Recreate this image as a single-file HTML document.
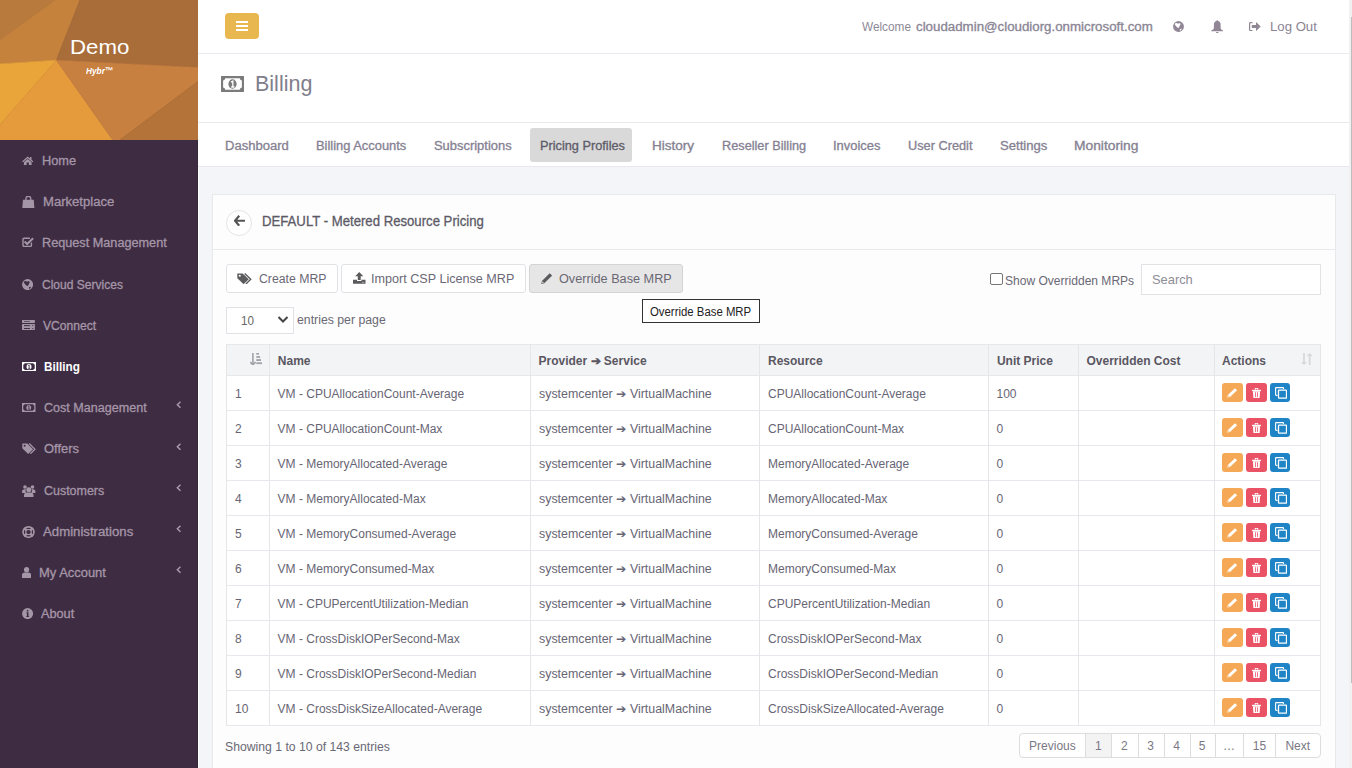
<!DOCTYPE html><html><head><meta charset="utf-8"><style>
*{box-sizing:border-box;margin:0;padding:0}
html,body{width:1352px;height:768px;overflow:hidden;font-family:"Liberation Sans",sans-serif;background:#f4f5f9}
.t{position:absolute;line-height:1;white-space:nowrap}
.b{position:absolute}
</style></head><body>
<div class="b" style="left:0;top:0;width:198px;height:768px;background:#3e2c43"></div>
<svg class="b" style="left:0;top:0" width="198" height="140"><polygon fill="#b97a3e" stroke="#b97a3e" stroke-width="0.6" points="0,0 55,0 0,40"/><polygon fill="#c4823d" stroke="#c4823d" stroke-width="0.6" points="55,0 80,0 56.4,60.2 0,63.9 0,40"/><polygon fill="#a96d3a" stroke="#a96d3a" stroke-width="0.6" points="80,0 198,0 198,67.6 56.4,60.2"/><polygon fill="#e9a53a" stroke="#e9a53a" stroke-width="0.6" points="0,63.9 56.4,60.2 0,124.7"/><polygon fill="#e59b3b" stroke="#e59b3b" stroke-width="0.6" points="0,124.7 56.4,60.2 112.7,140 0,140"/><polygon fill="#c88040" stroke="#c88040" stroke-width="0.6" points="56.4,60.2 198,67.6 198,81.5 120,140 112.7,140"/><polygon fill="#b37339" stroke="#b37339" stroke-width="0.6" points="198,81.5 198,140 120,140"/></svg>
<div class="t" style="left:69.64px;top:36.32px;font-size:21px;color:#fff;font-weight:normal;;transform:scaleX(1.0593);transform-origin:0 0;">Demo</div>
<div class="t" style="left:86.00px;top:66.16px;font-size:9.5px;color:#fff;font-weight:bold;font-style:italic;transform:scaleX(0.8710);transform-origin:0 0;">Hybr™</div>
<div class="t" style="left:41.74px;top:154.94px;font-size:12px;color:#a596a7;-webkit-text-stroke:0.3px #a596a7;;transform:scaleX(1.0645);transform-origin:0 0;">Home</div>
<svg class="b" style="left:22.3px;top:155.7px;" width="11.5" height="9.3" viewBox="0 0 12 9.4" preserveAspectRatio="none"><path d="M6 0.6 L0.2 5.4 L1 6.3 L6 2.2 L11 6.3 L11.8 5.4 L9.9 3.8 V0.9 H8.4 V2.5 Z" fill="#a596a7"/><path d="M2 6.2 L6 3 L10 6.2 V9.4 H7.2 V6.6 H4.8 V9.4 H2 Z" fill="#a596a7"/></svg>
<div class="t" style="left:42.61px;top:196.14px;font-size:12px;color:#a596a7;-webkit-text-stroke:0.3px #a596a7;;transform:scaleX(1.0906);transform-origin:0 0;">Marketplace</div>
<svg class="b" style="left:22.2px;top:195.7px;" width="12.7" height="12.3" viewBox="0 0 13 12.3" preserveAspectRatio="none"><path d="M4 4.5 V2.6 A2.5 2.3 0 0 1 9 2.6 V4.5" stroke="#a596a7" stroke-width="1.3" fill="none"/><path d="M1 3.7 H12 L12.7 12.3 H0.3 Z" fill="#a596a7"/></svg>
<div class="t" style="left:41.64px;top:237.34px;font-size:12px;color:#a596a7;-webkit-text-stroke:0.3px #a596a7;;transform:scaleX(1.0564);transform-origin:0 0;">Request Management</div>
<svg class="b" style="left:22px;top:237.0px;" width="11.9" height="10" viewBox="0 0 12 10" preserveAspectRatio="none"><path d="M8 1.2 H2.2 A1.2 1.2 0 0 0 1 2.4 V8.3 A1.2 1.2 0 0 0 2.2 9.5 H8.3 A1.2 1.2 0 0 0 9.5 8.3 V5.5" stroke="#a596a7" stroke-width="1.4" fill="none"/><path d="M2.6 4.6 L5.2 7 L11.2 1.2" stroke="#a596a7" stroke-width="2" fill="none"/></svg>
<div class="t" style="left:41.70px;top:278.54px;font-size:12px;color:#a596a7;-webkit-text-stroke:0.3px #a596a7;;transform:scaleX(1.0025);transform-origin:0 0;">Cloud Services</div>
<svg class="b" style="left:22px;top:279.0px;" width="11.2" height="11.2" viewBox="0 0 11.2 11.2" preserveAspectRatio="none"><circle cx="5.6" cy="5.6" r="5.5" fill="#a596a7"/><path d="M1.8 3.2 Q2.6 1.6 4.2 2.3 Q5.2 3.2 6.2 2.3 Q7.6 1.9 7.8 3.3 Q6.8 4.6 6.3 6.2 Q5.8 7.4 4.9 6.8 Q2.8 5.3 1.8 3.2 Z" fill="#3e2c43"/><path d="M6.9 8.6 Q7.8 7.4 8.9 8 Q8.8 9.3 7.6 9.9 Q6.8 9.5 6.9 8.6 Z" fill="#3e2c43"/></svg>
<div class="t" style="left:43.40px;top:319.74px;font-size:12px;color:#a596a7;-webkit-text-stroke:0.3px #a596a7;;transform:scaleX(1.0094);transform-origin:0 0;">VConnect</div>
<svg class="b" style="left:22px;top:320.0px;" width="12.9" height="9.9" viewBox="0 0 13 10" preserveAspectRatio="none"><rect x="0" y="0" width="13" height="3" rx="0.6" fill="#a596a7"/><rect x="0" y="4" width="13" height="6" rx="0.6" fill="#a596a7"/><rect x="2" y="1" width="6" height="0.9" fill="#3e2c43" opacity=".7"/><rect x="2" y="5.2" width="6" height="1" fill="#3e2c43"/><rect x="2" y="8.1" width="6" height="1" fill="#3e2c43"/><rect x="10" y="5.2" width="1.6" height="1" fill="#3e2c43" opacity=".7"/><rect x="10" y="8.1" width="1.6" height="1" fill="#3e2c43" opacity=".7"/></svg>
<div class="t" style="left:43.70px;top:360.94px;font-size:12px;color:#ffffff;font-weight:bold;;transform:scaleX(0.9778);transform-origin:0 0;">Billing</div>
<svg class="b" style="left:22px;top:361.7px;" width="14" height="9.3" viewBox="0 0 14 9.3" preserveAspectRatio="none"><rect x="0" y="0" width="14" height="9.3" fill="#ffffff"/><path d="M2.6 1.3 H11.4 A1.4 1.4 0 0 0 12.7 2.6 V6.7 A1.4 1.4 0 0 0 11.4 8 H2.6 A1.4 1.4 0 0 0 1.3 6.7 V2.6 A1.4 1.4 0 0 0 2.6 1.3 Z" fill="#3e2c43"/><ellipse cx="7" cy="4.65" rx="2.5" ry="2.7" fill="#ffffff"/><path d="M6.1 3.6 L7.2 3 V6.4 M6.2 6.4 H8.2" stroke="#3e2c43" stroke-width="0.8" fill="none"/></svg>
<div class="t" style="left:44.30px;top:402.14px;font-size:12px;color:#a596a7;-webkit-text-stroke:0.3px #a596a7;;transform:scaleX(1.0469);transform-origin:0 0;">Cost Management</div>
<svg class="b" style="left:176px;top:401.3px" width="6" height="8"><path d="M4.5 0.8 L1.3 3.8 L4.5 6.8" stroke="#a99cab" stroke-width="1.4" fill="none"/></svg>
<svg class="b" style="left:22px;top:402.9px;" width="13.5" height="9.0" viewBox="0 0 14 9.3" preserveAspectRatio="none"><rect x="0" y="0" width="14" height="9.3" fill="#a596a7"/><path d="M2.6 1.3 H11.4 A1.4 1.4 0 0 0 12.7 2.6 V6.7 A1.4 1.4 0 0 0 11.4 8 H2.6 A1.4 1.4 0 0 0 1.3 6.7 V2.6 A1.4 1.4 0 0 0 2.6 1.3 Z" fill="#3e2c43"/><ellipse cx="7" cy="4.65" rx="2.5" ry="2.7" fill="#a596a7"/><path d="M6.1 3.6 L7.2 3 V6.4 M6.2 6.4 H8.2" stroke="#3e2c43" stroke-width="0.8" fill="none"/></svg>
<div class="t" style="left:44.00px;top:443.34px;font-size:12px;color:#a596a7;-webkit-text-stroke:0.3px #a596a7;;transform:scaleX(1.0781);transform-origin:0 0;">Offers</div>
<svg class="b" style="left:176px;top:442.5px" width="6" height="8"><path d="M4.5 0.8 L1.3 3.8 L4.5 6.8" stroke="#a99cab" stroke-width="1.4" fill="none"/></svg>
<svg class="b" style="left:22px;top:443.0px;" width="13.5" height="10.9" viewBox="0 0 13.5 11" preserveAspectRatio="none"><path d="M0.3 0.5 H5.3 L11 6.2 L6.2 11 L0.3 5.2 Z" fill="#a596a7"/><circle cx="2.6" cy="2.8" r="1" fill="#3e2c43"/><path d="M7.2 0.5 L12.9 6.2 L8.4 10.8" stroke="#a596a7" stroke-width="1.3" fill="none"/></svg>
<div class="t" style="left:44.00px;top:484.54px;font-size:12px;color:#a596a7;-webkit-text-stroke:0.3px #a596a7;;transform:scaleX(1.0379);transform-origin:0 0;">Customers</div>
<svg class="b" style="left:176px;top:483.7px" width="6" height="8"><path d="M4.5 0.8 L1.3 3.8 L4.5 6.8" stroke="#a99cab" stroke-width="1.4" fill="none"/></svg>
<svg class="b" style="left:22px;top:484.7px;" width="13.5" height="12.2" viewBox="0 0 13.5 12.2" preserveAspectRatio="none"><circle cx="3" cy="2" r="1.8" fill="#a596a7"/><circle cx="10.5" cy="2" r="1.8" fill="#a596a7"/><path d="M0 6.8 Q0 4.2 2.6 4.2 H4 Q3 5.5 4 8 H0.2 Z" fill="#a596a7"/><path d="M13.5 6.8 Q13.5 4.2 10.9 4.2 H9.5 Q10.5 5.5 9.5 8 H13.3 Z" fill="#a596a7"/><circle cx="6.75" cy="4.7" r="2.5" fill="#a596a7"/><path d="M2 12.2 V10.5 Q2 7.6 5 7.6 H8.5 Q11.5 7.6 11.5 10.5 V12.2 Z" fill="#a596a7"/></svg>
<div class="t" style="left:43.00px;top:525.74px;font-size:12px;color:#a596a7;-webkit-text-stroke:0.3px #a596a7;;transform:scaleX(1.1000);transform-origin:0 0;">Administrations</div>
<svg class="b" style="left:176px;top:524.9px" width="6" height="8"><path d="M4.5 0.8 L1.3 3.8 L4.5 6.8" stroke="#a99cab" stroke-width="1.4" fill="none"/></svg>
<svg class="b" style="left:22px;top:525.7px;" width="13" height="12.2" viewBox="0 0 13 12.2" preserveAspectRatio="none"><ellipse cx="6.5" cy="6.1" rx="6.3" ry="6.0" fill="#a596a7"/><ellipse cx="6.5" cy="6.1" rx="4.0" ry="3.8" stroke="#3e2c43" stroke-width="1.3" fill="none"/><path d="M2.2 2 L10.8 10.2 M10.8 2 L2.2 10.2" stroke="#a596a7" stroke-width="2.4"/><ellipse cx="6.5" cy="6.1" rx="2.2" ry="2.1" fill="#3e2c43"/></svg>
<div class="t" style="left:38.72px;top:566.94px;font-size:12px;color:#a596a7;-webkit-text-stroke:0.3px #a596a7;;transform:scaleX(1.0787);transform-origin:0 0;">My Account</div>
<svg class="b" style="left:176px;top:566.1px" width="6" height="8"><path d="M4.5 0.8 L1.3 3.8 L4.5 6.8" stroke="#a99cab" stroke-width="1.4" fill="none"/></svg>
<svg class="b" style="left:22px;top:567.2px;" width="9.2" height="11.0" viewBox="0 0 9.2 11" preserveAspectRatio="none"><circle cx="4.6" cy="2.7" r="2.6" fill="#a596a7"/><path d="M0 11 V8.3 Q0 5.5 2.8 5.5 H6.4 Q9.2 5.5 9.2 8.3 V11 Z" fill="#a596a7"/></svg>
<div class="t" style="left:41.40px;top:608.14px;font-size:12px;color:#a596a7;-webkit-text-stroke:0.3px #a596a7;;transform:scaleX(1.0594);transform-origin:0 0;">About</div>
<svg class="b" style="left:22px;top:608.0px;" width="11.2" height="11.2" viewBox="0 0 11.2 11.2" preserveAspectRatio="none"><circle cx="5.6" cy="5.6" r="5.5" fill="#a596a7"/><circle cx="5.6" cy="2.7" r="0.9" fill="#3e2c43"/><path d="M4.4 4.3 H6.5 V8.2 H7.2 V9.1 H4.2 V8.2 H4.9 V5.2 H4.4 Z" fill="#3e2c43"/></svg>
<div class="b" style="left:198px;top:0;width:1px;height:768px;background:#fff"></div>
<div class="b" style="left:197px;top:140px;width:1px;height:628px;background:#36283b"></div>
<div class="b" style="left:198px;top:0;width:1154px;height:53px;background:#fff"></div>
<div class="b" style="left:198px;top:53px;width:1154px;height:1px;background:#e8ebef"></div>
<div class="b" style="left:225px;top:13px;width:34px;height:26px;background:#e9b74f;border-radius:4px"></div>
<div class="b" style="left:236px;top:21px;width:12px;height:2px;background:#fff"></div>
<div class="b" style="left:236px;top:25px;width:12px;height:2px;background:#fff"></div>
<div class="b" style="left:236px;top:29px;width:12px;height:2px;background:#fff"></div>
<div class="t" style="left:862.20px;top:20.54px;font-size:12px;color:#8d8996;font-weight:normal;;transform:scaleX(0.9840);transform-origin:0 0;">Welcome</div>
<div class="t" style="left:915.90px;top:20.54px;font-size:12px;color:#8a8594;-webkit-text-stroke:0.3px #8a8594;;transform:scaleX(1.1085);transform-origin:0 0;">cloudadmin@cloudiorg.onmicrosoft.com</div>
<div class="t" style="left:1269.59px;top:19.50px;font-size:13px;color:#8a8494;font-weight:normal;;transform:scaleX(1.0130);transform-origin:0 0;">Log Out</div>
<svg class="b" style="left:1173.3px;top:20.9px;" width="11" height="11" viewBox="0 0 11.2 11.2" preserveAspectRatio="none"><circle cx="5.6" cy="5.6" r="5.5" fill="#918695"/><path d="M1.8 3.2 Q2.6 1.6 4.2 2.3 Q5.2 3.2 6.2 2.3 Q7.6 1.9 7.8 3.3 Q6.8 4.6 6.3 6.2 Q5.8 7.4 4.9 6.8 Q2.8 5.3 1.8 3.2 Z" fill="#fff"/><path d="M6.9 8.6 Q7.8 7.4 8.9 8 Q8.8 9.3 7.6 9.9 Q6.8 9.5 6.9 8.6 Z" fill="#fff"/></svg>
<svg class="b" style="left:1210.7px;top:19.7px;" width="12.5" height="13.1" viewBox="0 0 12.5 13.1" preserveAspectRatio="none"><path d="M6.25 0.2 Q7.1 0.2 7.1 1.1 Q9.6 1.7 9.6 4.8 V8.2 Q9.8 9.4 12.3 10.6 V11.3 H0.2 V10.6 Q2.7 9.4 2.9 8.2 V4.8 Q2.9 1.7 5.4 1.1 Q5.4 0.2 6.25 0.2 Z" fill="#918695"/><path d="M4.9 11.9 H7.6 Q7.4 13.1 6.25 13.1 Q5.1 13.1 4.9 11.9 Z" fill="#918695"/></svg>
<svg class="b" style="left:1249.2px;top:21.7px;" width="11.7" height="9.1" viewBox="0 0 11.7 9.1" preserveAspectRatio="none"><path d="M3.5 0.6 H1.3 A0.8 0.8 0 0 0 0.6 1.4 V7.7 A0.8 0.8 0 0 0 1.3 8.5 H3.5" stroke="#918695" stroke-width="1.2" fill="none"/><path d="M2.8 3 H7 V0 L11.7 4.55 L7 9.1 V6.1 H2.8 Z" fill="#918695"/></svg>
<div class="b" style="left:198px;top:54px;width:1154px;height:68px;background:#fff"></div>
<div class="b" style="left:198px;top:122px;width:1154px;height:1px;background:#e8e9ed"></div>
<div class="t" style="left:255.32px;top:73.38px;font-size:22px;color:#807e8c;font-weight:normal;;transform:scaleX(0.9772);transform-origin:0 0;">Billing</div>
<svg class="b" style="left:221px;top:76px;" width="23" height="16" viewBox="0 0 14 9.3" preserveAspectRatio="none"><rect x="0" y="0" width="14" height="9.3" fill="#7b7b7b"/><path d="M2.6 1.3 H11.4 A1.4 1.4 0 0 0 12.7 2.6 V6.7 A1.4 1.4 0 0 0 11.4 8 H2.6 A1.4 1.4 0 0 0 1.3 6.7 V2.6 A1.4 1.4 0 0 0 2.6 1.3 Z" fill="#fff"/><ellipse cx="7" cy="4.65" rx="2.5" ry="2.7" fill="#7b7b7b"/><path d="M6.1 3.6 L7.2 3 V6.4 M6.2 6.4 H8.2" stroke="#fff" stroke-width="0.8" fill="none"/></svg>
<div class="b" style="left:198px;top:123px;width:1154px;height:43px;background:#fff"></div>
<div class="b" style="left:198px;top:166px;width:1154px;height:1px;background:#e6e8ec"></div>
<div class="b" style="left:530px;top:128px;width:102px;height:34px;background:#d9d9d9;border-radius:3px"></div>
<div class="t" style="left:225.01px;top:140.34px;font-size:12px;color:#858192;-webkit-text-stroke:0.3px #858192;;transform:scaleX(1.0877);transform-origin:0 0;">Dashboard</div>
<div class="t" style="left:316.03px;top:140.34px;font-size:12px;color:#858192;-webkit-text-stroke:0.3px #858192;;transform:scaleX(1.0735);transform-origin:0 0;">Billing Accounts</div>
<div class="t" style="left:434.12px;top:140.34px;font-size:12px;color:#858192;-webkit-text-stroke:0.3px #858192;;transform:scaleX(1.0775);transform-origin:0 0;">Subscriptions</div>
<div class="t" style="left:539.54px;top:140.34px;font-size:12px;color:#5f5c69;-webkit-text-stroke:0.3px #5f5c69;;transform:scaleX(1.0620);transform-origin:0 0;">Pricing Profiles</div>
<div class="t" style="left:652.47px;top:140.34px;font-size:12px;color:#858192;-webkit-text-stroke:0.3px #858192;;transform:scaleX(1.1278);transform-origin:0 0;">History</div>
<div class="t" style="left:722.04px;top:140.34px;font-size:12px;color:#858192;-webkit-text-stroke:0.3px #858192;;transform:scaleX(1.0603);transform-origin:0 0;">Reseller Billing</div>
<div class="t" style="left:833.22px;top:140.34px;font-size:12px;color:#858192;-webkit-text-stroke:0.3px #858192;;transform:scaleX(1.0767);transform-origin:0 0;">Invoices</div>
<div class="t" style="left:907.94px;top:140.34px;font-size:12px;color:#858192;-webkit-text-stroke:0.3px #858192;;transform:scaleX(1.0617);transform-origin:0 0;">User Credit</div>
<div class="t" style="left:1000.11px;top:140.34px;font-size:12px;color:#858192;-webkit-text-stroke:0.3px #858192;;transform:scaleX(1.0905);transform-origin:0 0;">Settings</div>
<div class="t" style="left:1074.25px;top:140.34px;font-size:12px;color:#858192;-webkit-text-stroke:0.3px #858192;;transform:scaleX(1.1491);transform-origin:0 0;">Monitoring</div>
<div class="b" style="left:212px;top:194px;width:1124px;height:600px;background:#fdfdfd;border:1px solid #e7e9ed"></div>
<div class="b" style="left:213px;top:249px;width:1122px;height:1px;background:#e7e9ed"></div>
<div class="b" style="left:226px;top:209.5px;width:26px;height:26px;border:1px solid #e4e4e4;border-radius:50%;background:#fff"></div>
<div class="t" style="left:262.46px;top:214.35px;font-size:14px;color:#5c5a66;-webkit-text-stroke:0.3px #5c5a66;;transform:scaleX(0.9400);transform-origin:0 0;">DEFAULT - Metered Resource Pricing</div>
<svg class="b" style="left:234.2px;top:214.9px;" width="11.3" height="11.5" viewBox="0 0 11.3 11.5" preserveAspectRatio="none"><path d="M5.2 0.8 L1 5.75 L5.2 10.7 M1.2 5.75 H11.3" stroke="#555555" stroke-width="2.2" fill="none"/></svg>
<div class="b" style="left:226px;top:264px;width:112px;height:29px;background:#fff;border:1px solid #e0e2e6;border-radius:3px"></div>
<div class="b" style="left:341px;top:264px;width:185px;height:29px;background:#fff;border:1px solid #e0e2e6;border-radius:3px"></div>
<div class="b" style="left:529px;top:264px;width:154px;height:29px;background:#e6e6e6;border:1px solid #d4d4d4;border-radius:3px"></div>
<svg class="b" style="left:237.4px;top:272.7px;" width="14.4" height="11.2" viewBox="0 0 13.5 11" preserveAspectRatio="none"><path d="M0.3 0.5 H5.3 L11 6.2 L6.2 11 L0.3 5.2 Z" fill="#5b5b5e"/><circle cx="2.6" cy="2.8" r="1" fill="#fff"/><path d="M7.2 0.5 L12.9 6.2 L8.4 10.8" stroke="#5b5b5e" stroke-width="1.3" fill="none"/></svg>
<svg class="b" style="left:353px;top:272px;" width="12.5" height="11.8" viewBox="0 0 12.5 11.8" preserveAspectRatio="none"><path d="M6.25 0 L10.3 4.2 H7.7 V8 H4.8 V4.2 H2.2 Z" fill="#5b5b5e"/><path d="M0 7.7 H4 V9 H8.5 V7.7 H12.5 V11.8 H0 Z" fill="#5b5b5e"/><circle cx="9.3" cy="10.2" r="0.45" fill="#fff"/><circle cx="10.8" cy="10.2" r="0.45" fill="#fff"/></svg>
<svg class="b" style="left:540.6px;top:272.7px;" width="11.4" height="11.2" viewBox="0 0 11.5 11.5" preserveAspectRatio="none"><path d="M8.8 0.3 L11.2 2.7 L3.3 10.6 L0.3 11.2 L0.9 8.2 Z" fill="#5b5b5e"/><path d="M1.6 8.6 L2.9 9.9 L1 10.4 Z" fill="#e6e6e6"/></svg>
<div class="t" style="left:258.50px;top:273.12px;font-size:12.5px;color:#6a6874;font-weight:normal;;transform:scaleX(0.9812);transform-origin:0 0;">Create MRP</div>
<div class="t" style="left:371.29px;top:273.12px;font-size:12.5px;color:#6a6874;font-weight:normal;;transform:scaleX(1.0078);transform-origin:0 0;">Import CSP License MRP</div>
<div class="t" style="left:559.00px;top:273.12px;font-size:12.5px;color:#6a6874;font-weight:normal;;transform:scaleX(1.0144);transform-origin:0 0;">Override Base MRP</div>
<div class="b" style="left:642px;top:299px;width:118px;height:24px;background:#fff;border:1px solid #333"></div>
<div class="t" style="left:650.40px;top:305.54px;font-size:12px;color:#222;font-weight:normal;;transform:scaleX(0.9481);transform-origin:0 0;">Override Base MRP</div>
<div class="b" style="left:226px;top:307px;width:68px;height:27px;background:#fff;border:1px solid #e0e2e6"></div>
<div class="t" style="left:240.53px;top:314.84px;font-size:12px;color:#666;font-weight:normal;;transform:scaleX(0.9750);transform-origin:0 0;">10</div>
<svg class="b" style="left:277px;top:315px" width="12" height="9"><path d="M1.5 2 L6 6.5 L10.5 2" stroke="#444" stroke-width="2" fill="none"/></svg>
<div class="t" style="left:296.80px;top:314.42px;font-size:12.5px;color:#6a6874;font-weight:normal;;transform:scaleX(0.9822);transform-origin:0 0;">entries per page</div>
<div class="b" style="left:990px;top:273px;width:13px;height:12px;background:#fff;border:1px solid #767676;border-radius:2px"></div>
<div class="t" style="left:1004.84px;top:275.32px;font-size:12.5px;color:#6a6874;font-weight:normal;;transform:scaleX(0.9632);transform-origin:0 0;">Show Overridden MRPs</div>
<div class="b" style="left:1141px;top:264px;width:180px;height:31px;background:#fff;border:1px solid #e0e2e6"></div>
<div class="t" style="left:1151.91px;top:273.00px;font-size:13px;color:#8e8c96;font-weight:normal;;transform:scaleX(0.9900);transform-origin:0 0;">Search</div>
<div class="b" style="left:226px;top:344px;width:1095px;height:31px;background:#f3f4f6"></div>
<div class="b" style="left:226px;top:375px;width:1095px;height:350px;background:#fff"></div>
<div class="b" style="left:226px;top:344px;width:1095px;height:1px;background:#e5e8ec"></div>
<div class="b" style="left:226px;top:375px;width:1095px;height:1px;background:#e5e8ec"></div>
<div class="b" style="left:226px;top:410px;width:1095px;height:1px;background:#e5e8ec"></div>
<div class="b" style="left:226px;top:445px;width:1095px;height:1px;background:#e5e8ec"></div>
<div class="b" style="left:226px;top:480px;width:1095px;height:1px;background:#e5e8ec"></div>
<div class="b" style="left:226px;top:515px;width:1095px;height:1px;background:#e5e8ec"></div>
<div class="b" style="left:226px;top:550px;width:1095px;height:1px;background:#e5e8ec"></div>
<div class="b" style="left:226px;top:585px;width:1095px;height:1px;background:#e5e8ec"></div>
<div class="b" style="left:226px;top:620px;width:1095px;height:1px;background:#e5e8ec"></div>
<div class="b" style="left:226px;top:655px;width:1095px;height:1px;background:#e5e8ec"></div>
<div class="b" style="left:226px;top:690px;width:1095px;height:1px;background:#e5e8ec"></div>
<div class="b" style="left:226px;top:725px;width:1095px;height:1px;background:#e5e8ec"></div>
<div class="b" style="left:226px;top:344px;width:1px;height:382px;background:#e6e6e6"></div>
<div class="b" style="left:269px;top:344px;width:1px;height:382px;background:#e6e6e6"></div>
<div class="b" style="left:530px;top:344px;width:1px;height:382px;background:#e6e6e6"></div>
<div class="b" style="left:759px;top:344px;width:1px;height:382px;background:#e6e6e6"></div>
<div class="b" style="left:988px;top:344px;width:1px;height:382px;background:#e6e6e6"></div>
<div class="b" style="left:1078px;top:344px;width:1px;height:382px;background:#e6e6e6"></div>
<div class="b" style="left:1214px;top:344px;width:1px;height:382px;background:#e6e6e6"></div>
<div class="b" style="left:1320px;top:344px;width:1px;height:382px;background:#e6e6e6"></div>
<div class="t" style="left:277.80px;top:355.14px;font-size:12px;color:#5a5762;font-weight:bold;;">Name</div>
<div class="t" style="left:538.50px;top:355.14px;font-size:12px;color:#5a5762;font-weight:bold;;">Provider ➔ Service</div>
<div class="t" style="left:768.00px;top:355.14px;font-size:12px;color:#5a5762;font-weight:bold;;">Resource</div>
<div class="t" style="left:996.90px;top:355.14px;font-size:12px;color:#5a5762;font-weight:bold;;">Unit Price</div>
<div class="t" style="left:1086.50px;top:355.14px;font-size:12px;color:#5a5762;font-weight:bold;;">Overridden Cost</div>
<div class="t" style="left:1222.00px;top:355.14px;font-size:12px;color:#5a5762;font-weight:bold;;">Actions</div>
<div class="t" style="left:235.00px;top:387.84px;font-size:12px;color:#676574;font-weight:normal;;">1</div>
<div class="t" style="left:277.60px;top:387.84px;font-size:12px;color:#676574;font-weight:normal;;">VM - CPUAllocationCount-Average</div>
<div class="t" style="left:538.50px;top:387.84px;font-size:12px;color:#676574;font-weight:normal;;transform:scaleX(1.0329);transform-origin:0 0;">systemcenter ➔ VirtualMachine</div>
<div class="t" style="left:768.00px;top:387.84px;font-size:12px;color:#676574;font-weight:normal;;">CPUAllocationCount-Average</div>
<div class="t" style="left:996.50px;top:387.84px;font-size:12px;color:#676574;font-weight:normal;;">100</div>
<div class="b" style="left:1222px;top:383px;width:21px;height:19px;background:#f5a855;border-radius:3px"></div>
<div class="b" style="left:1246px;top:383px;width:21px;height:19px;background:#ea5265;border-radius:3px"></div>
<div class="b" style="left:1270px;top:383px;width:20px;height:19px;background:#1f84c6;border-radius:3px"></div>
<svg class="b" style="left:1227.2px;top:388px;" width="10.4" height="9.8" viewBox="0 0 11.5 11.5" preserveAspectRatio="none"><path d="M8.8 0.3 L11.2 2.7 L3.3 10.6 L0.3 11.2 L0.9 8.2 Z" fill="#ffffff"/><path d="M1.6 8.6 L2.9 9.9 L1 10.4 Z" fill="#f5a855"/></svg>
<svg class="b" style="left:1251.7px;top:388px;" width="9" height="10.1" viewBox="0 0 9 10" preserveAspectRatio="none"><path d="M3.2 1.8 V0.9 Q3.2 0.2 4 0.2 H5 Q5.8 0.2 5.8 0.9 V1.8" stroke="#ffffff" stroke-width="1" fill="none"/><rect x="0" y="1.8" width="9" height="1.3" fill="#ffffff"/><path d="M0.9 3.1 H8.1 L7.6 10 H1.4 Z" fill="#ffffff"/><rect x="3.1" y="4.2" width="0.8" height="4.8" fill="#ea5265"/><rect x="5.1" y="4.2" width="0.8" height="4.8" fill="#ea5265"/></svg>
<svg class="b" style="left:1274.8px;top:387.2px;" width="12" height="11.7" viewBox="0 0 12 11.8" preserveAspectRatio="none"><path d="M8.5 2 V1.2 Q8.5 0.6 7.9 0.6 H1.2 Q0.6 0.6 0.6 1.2 V7.9 Q0.6 8.5 1.2 8.5 H2.5" stroke="#ffffff" stroke-width="1.1" fill="none"/><rect x="3.5" y="3.2" width="8" height="8" rx="0.6" stroke="#ffffff" stroke-width="1.3" fill="none"/></svg>
<div class="t" style="left:235.00px;top:422.84px;font-size:12px;color:#676574;font-weight:normal;;">2</div>
<div class="t" style="left:277.60px;top:422.84px;font-size:12px;color:#676574;font-weight:normal;;">VM - CPUAllocationCount-Max</div>
<div class="t" style="left:538.50px;top:422.84px;font-size:12px;color:#676574;font-weight:normal;;transform:scaleX(1.0329);transform-origin:0 0;">systemcenter ➔ VirtualMachine</div>
<div class="t" style="left:768.00px;top:422.84px;font-size:12px;color:#676574;font-weight:normal;;">CPUAllocationCount-Max</div>
<div class="t" style="left:996.50px;top:422.84px;font-size:12px;color:#676574;font-weight:normal;;">0</div>
<div class="b" style="left:1222px;top:418px;width:21px;height:19px;background:#f5a855;border-radius:3px"></div>
<div class="b" style="left:1246px;top:418px;width:21px;height:19px;background:#ea5265;border-radius:3px"></div>
<div class="b" style="left:1270px;top:418px;width:20px;height:19px;background:#1f84c6;border-radius:3px"></div>
<svg class="b" style="left:1227.2px;top:423px;" width="10.4" height="9.8" viewBox="0 0 11.5 11.5" preserveAspectRatio="none"><path d="M8.8 0.3 L11.2 2.7 L3.3 10.6 L0.3 11.2 L0.9 8.2 Z" fill="#ffffff"/><path d="M1.6 8.6 L2.9 9.9 L1 10.4 Z" fill="#f5a855"/></svg>
<svg class="b" style="left:1251.7px;top:423px;" width="9" height="10.1" viewBox="0 0 9 10" preserveAspectRatio="none"><path d="M3.2 1.8 V0.9 Q3.2 0.2 4 0.2 H5 Q5.8 0.2 5.8 0.9 V1.8" stroke="#ffffff" stroke-width="1" fill="none"/><rect x="0" y="1.8" width="9" height="1.3" fill="#ffffff"/><path d="M0.9 3.1 H8.1 L7.6 10 H1.4 Z" fill="#ffffff"/><rect x="3.1" y="4.2" width="0.8" height="4.8" fill="#ea5265"/><rect x="5.1" y="4.2" width="0.8" height="4.8" fill="#ea5265"/></svg>
<svg class="b" style="left:1274.8px;top:422.2px;" width="12" height="11.7" viewBox="0 0 12 11.8" preserveAspectRatio="none"><path d="M8.5 2 V1.2 Q8.5 0.6 7.9 0.6 H1.2 Q0.6 0.6 0.6 1.2 V7.9 Q0.6 8.5 1.2 8.5 H2.5" stroke="#ffffff" stroke-width="1.1" fill="none"/><rect x="3.5" y="3.2" width="8" height="8" rx="0.6" stroke="#ffffff" stroke-width="1.3" fill="none"/></svg>
<div class="t" style="left:235.00px;top:457.84px;font-size:12px;color:#676574;font-weight:normal;;">3</div>
<div class="t" style="left:277.60px;top:457.84px;font-size:12px;color:#676574;font-weight:normal;;">VM - MemoryAllocated-Average</div>
<div class="t" style="left:538.50px;top:457.84px;font-size:12px;color:#676574;font-weight:normal;;transform:scaleX(1.0329);transform-origin:0 0;">systemcenter ➔ VirtualMachine</div>
<div class="t" style="left:768.00px;top:457.84px;font-size:12px;color:#676574;font-weight:normal;;">MemoryAllocated-Average</div>
<div class="t" style="left:996.50px;top:457.84px;font-size:12px;color:#676574;font-weight:normal;;">0</div>
<div class="b" style="left:1222px;top:453px;width:21px;height:19px;background:#f5a855;border-radius:3px"></div>
<div class="b" style="left:1246px;top:453px;width:21px;height:19px;background:#ea5265;border-radius:3px"></div>
<div class="b" style="left:1270px;top:453px;width:20px;height:19px;background:#1f84c6;border-radius:3px"></div>
<svg class="b" style="left:1227.2px;top:458px;" width="10.4" height="9.8" viewBox="0 0 11.5 11.5" preserveAspectRatio="none"><path d="M8.8 0.3 L11.2 2.7 L3.3 10.6 L0.3 11.2 L0.9 8.2 Z" fill="#ffffff"/><path d="M1.6 8.6 L2.9 9.9 L1 10.4 Z" fill="#f5a855"/></svg>
<svg class="b" style="left:1251.7px;top:458px;" width="9" height="10.1" viewBox="0 0 9 10" preserveAspectRatio="none"><path d="M3.2 1.8 V0.9 Q3.2 0.2 4 0.2 H5 Q5.8 0.2 5.8 0.9 V1.8" stroke="#ffffff" stroke-width="1" fill="none"/><rect x="0" y="1.8" width="9" height="1.3" fill="#ffffff"/><path d="M0.9 3.1 H8.1 L7.6 10 H1.4 Z" fill="#ffffff"/><rect x="3.1" y="4.2" width="0.8" height="4.8" fill="#ea5265"/><rect x="5.1" y="4.2" width="0.8" height="4.8" fill="#ea5265"/></svg>
<svg class="b" style="left:1274.8px;top:457.2px;" width="12" height="11.7" viewBox="0 0 12 11.8" preserveAspectRatio="none"><path d="M8.5 2 V1.2 Q8.5 0.6 7.9 0.6 H1.2 Q0.6 0.6 0.6 1.2 V7.9 Q0.6 8.5 1.2 8.5 H2.5" stroke="#ffffff" stroke-width="1.1" fill="none"/><rect x="3.5" y="3.2" width="8" height="8" rx="0.6" stroke="#ffffff" stroke-width="1.3" fill="none"/></svg>
<div class="t" style="left:235.00px;top:492.84px;font-size:12px;color:#676574;font-weight:normal;;">4</div>
<div class="t" style="left:277.60px;top:492.84px;font-size:12px;color:#676574;font-weight:normal;;">VM - MemoryAllocated-Max</div>
<div class="t" style="left:538.50px;top:492.84px;font-size:12px;color:#676574;font-weight:normal;;transform:scaleX(1.0329);transform-origin:0 0;">systemcenter ➔ VirtualMachine</div>
<div class="t" style="left:768.00px;top:492.84px;font-size:12px;color:#676574;font-weight:normal;;">MemoryAllocated-Max</div>
<div class="t" style="left:996.50px;top:492.84px;font-size:12px;color:#676574;font-weight:normal;;">0</div>
<div class="b" style="left:1222px;top:488px;width:21px;height:19px;background:#f5a855;border-radius:3px"></div>
<div class="b" style="left:1246px;top:488px;width:21px;height:19px;background:#ea5265;border-radius:3px"></div>
<div class="b" style="left:1270px;top:488px;width:20px;height:19px;background:#1f84c6;border-radius:3px"></div>
<svg class="b" style="left:1227.2px;top:493px;" width="10.4" height="9.8" viewBox="0 0 11.5 11.5" preserveAspectRatio="none"><path d="M8.8 0.3 L11.2 2.7 L3.3 10.6 L0.3 11.2 L0.9 8.2 Z" fill="#ffffff"/><path d="M1.6 8.6 L2.9 9.9 L1 10.4 Z" fill="#f5a855"/></svg>
<svg class="b" style="left:1251.7px;top:493px;" width="9" height="10.1" viewBox="0 0 9 10" preserveAspectRatio="none"><path d="M3.2 1.8 V0.9 Q3.2 0.2 4 0.2 H5 Q5.8 0.2 5.8 0.9 V1.8" stroke="#ffffff" stroke-width="1" fill="none"/><rect x="0" y="1.8" width="9" height="1.3" fill="#ffffff"/><path d="M0.9 3.1 H8.1 L7.6 10 H1.4 Z" fill="#ffffff"/><rect x="3.1" y="4.2" width="0.8" height="4.8" fill="#ea5265"/><rect x="5.1" y="4.2" width="0.8" height="4.8" fill="#ea5265"/></svg>
<svg class="b" style="left:1274.8px;top:492.2px;" width="12" height="11.7" viewBox="0 0 12 11.8" preserveAspectRatio="none"><path d="M8.5 2 V1.2 Q8.5 0.6 7.9 0.6 H1.2 Q0.6 0.6 0.6 1.2 V7.9 Q0.6 8.5 1.2 8.5 H2.5" stroke="#ffffff" stroke-width="1.1" fill="none"/><rect x="3.5" y="3.2" width="8" height="8" rx="0.6" stroke="#ffffff" stroke-width="1.3" fill="none"/></svg>
<div class="t" style="left:235.00px;top:527.84px;font-size:12px;color:#676574;font-weight:normal;;">5</div>
<div class="t" style="left:277.60px;top:527.84px;font-size:12px;color:#676574;font-weight:normal;;">VM - MemoryConsumed-Average</div>
<div class="t" style="left:538.50px;top:527.84px;font-size:12px;color:#676574;font-weight:normal;;transform:scaleX(1.0329);transform-origin:0 0;">systemcenter ➔ VirtualMachine</div>
<div class="t" style="left:768.00px;top:527.84px;font-size:12px;color:#676574;font-weight:normal;;">MemoryConsumed-Average</div>
<div class="t" style="left:996.50px;top:527.84px;font-size:12px;color:#676574;font-weight:normal;;">0</div>
<div class="b" style="left:1222px;top:523px;width:21px;height:19px;background:#f5a855;border-radius:3px"></div>
<div class="b" style="left:1246px;top:523px;width:21px;height:19px;background:#ea5265;border-radius:3px"></div>
<div class="b" style="left:1270px;top:523px;width:20px;height:19px;background:#1f84c6;border-radius:3px"></div>
<svg class="b" style="left:1227.2px;top:528px;" width="10.4" height="9.8" viewBox="0 0 11.5 11.5" preserveAspectRatio="none"><path d="M8.8 0.3 L11.2 2.7 L3.3 10.6 L0.3 11.2 L0.9 8.2 Z" fill="#ffffff"/><path d="M1.6 8.6 L2.9 9.9 L1 10.4 Z" fill="#f5a855"/></svg>
<svg class="b" style="left:1251.7px;top:528px;" width="9" height="10.1" viewBox="0 0 9 10" preserveAspectRatio="none"><path d="M3.2 1.8 V0.9 Q3.2 0.2 4 0.2 H5 Q5.8 0.2 5.8 0.9 V1.8" stroke="#ffffff" stroke-width="1" fill="none"/><rect x="0" y="1.8" width="9" height="1.3" fill="#ffffff"/><path d="M0.9 3.1 H8.1 L7.6 10 H1.4 Z" fill="#ffffff"/><rect x="3.1" y="4.2" width="0.8" height="4.8" fill="#ea5265"/><rect x="5.1" y="4.2" width="0.8" height="4.8" fill="#ea5265"/></svg>
<svg class="b" style="left:1274.8px;top:527.2px;" width="12" height="11.7" viewBox="0 0 12 11.8" preserveAspectRatio="none"><path d="M8.5 2 V1.2 Q8.5 0.6 7.9 0.6 H1.2 Q0.6 0.6 0.6 1.2 V7.9 Q0.6 8.5 1.2 8.5 H2.5" stroke="#ffffff" stroke-width="1.1" fill="none"/><rect x="3.5" y="3.2" width="8" height="8" rx="0.6" stroke="#ffffff" stroke-width="1.3" fill="none"/></svg>
<div class="t" style="left:235.00px;top:562.84px;font-size:12px;color:#676574;font-weight:normal;;">6</div>
<div class="t" style="left:277.60px;top:562.84px;font-size:12px;color:#676574;font-weight:normal;;">VM - MemoryConsumed-Max</div>
<div class="t" style="left:538.50px;top:562.84px;font-size:12px;color:#676574;font-weight:normal;;transform:scaleX(1.0329);transform-origin:0 0;">systemcenter ➔ VirtualMachine</div>
<div class="t" style="left:768.00px;top:562.84px;font-size:12px;color:#676574;font-weight:normal;;">MemoryConsumed-Max</div>
<div class="t" style="left:996.50px;top:562.84px;font-size:12px;color:#676574;font-weight:normal;;">0</div>
<div class="b" style="left:1222px;top:558px;width:21px;height:19px;background:#f5a855;border-radius:3px"></div>
<div class="b" style="left:1246px;top:558px;width:21px;height:19px;background:#ea5265;border-radius:3px"></div>
<div class="b" style="left:1270px;top:558px;width:20px;height:19px;background:#1f84c6;border-radius:3px"></div>
<svg class="b" style="left:1227.2px;top:563px;" width="10.4" height="9.8" viewBox="0 0 11.5 11.5" preserveAspectRatio="none"><path d="M8.8 0.3 L11.2 2.7 L3.3 10.6 L0.3 11.2 L0.9 8.2 Z" fill="#ffffff"/><path d="M1.6 8.6 L2.9 9.9 L1 10.4 Z" fill="#f5a855"/></svg>
<svg class="b" style="left:1251.7px;top:563px;" width="9" height="10.1" viewBox="0 0 9 10" preserveAspectRatio="none"><path d="M3.2 1.8 V0.9 Q3.2 0.2 4 0.2 H5 Q5.8 0.2 5.8 0.9 V1.8" stroke="#ffffff" stroke-width="1" fill="none"/><rect x="0" y="1.8" width="9" height="1.3" fill="#ffffff"/><path d="M0.9 3.1 H8.1 L7.6 10 H1.4 Z" fill="#ffffff"/><rect x="3.1" y="4.2" width="0.8" height="4.8" fill="#ea5265"/><rect x="5.1" y="4.2" width="0.8" height="4.8" fill="#ea5265"/></svg>
<svg class="b" style="left:1274.8px;top:562.2px;" width="12" height="11.7" viewBox="0 0 12 11.8" preserveAspectRatio="none"><path d="M8.5 2 V1.2 Q8.5 0.6 7.9 0.6 H1.2 Q0.6 0.6 0.6 1.2 V7.9 Q0.6 8.5 1.2 8.5 H2.5" stroke="#ffffff" stroke-width="1.1" fill="none"/><rect x="3.5" y="3.2" width="8" height="8" rx="0.6" stroke="#ffffff" stroke-width="1.3" fill="none"/></svg>
<div class="t" style="left:235.00px;top:597.84px;font-size:12px;color:#676574;font-weight:normal;;">7</div>
<div class="t" style="left:277.60px;top:597.84px;font-size:12px;color:#676574;font-weight:normal;;">VM - CPUPercentUtilization-Median</div>
<div class="t" style="left:538.50px;top:597.84px;font-size:12px;color:#676574;font-weight:normal;;transform:scaleX(1.0329);transform-origin:0 0;">systemcenter ➔ VirtualMachine</div>
<div class="t" style="left:768.00px;top:597.84px;font-size:12px;color:#676574;font-weight:normal;;">CPUPercentUtilization-Median</div>
<div class="t" style="left:996.50px;top:597.84px;font-size:12px;color:#676574;font-weight:normal;;">0</div>
<div class="b" style="left:1222px;top:593px;width:21px;height:19px;background:#f5a855;border-radius:3px"></div>
<div class="b" style="left:1246px;top:593px;width:21px;height:19px;background:#ea5265;border-radius:3px"></div>
<div class="b" style="left:1270px;top:593px;width:20px;height:19px;background:#1f84c6;border-radius:3px"></div>
<svg class="b" style="left:1227.2px;top:598px;" width="10.4" height="9.8" viewBox="0 0 11.5 11.5" preserveAspectRatio="none"><path d="M8.8 0.3 L11.2 2.7 L3.3 10.6 L0.3 11.2 L0.9 8.2 Z" fill="#ffffff"/><path d="M1.6 8.6 L2.9 9.9 L1 10.4 Z" fill="#f5a855"/></svg>
<svg class="b" style="left:1251.7px;top:598px;" width="9" height="10.1" viewBox="0 0 9 10" preserveAspectRatio="none"><path d="M3.2 1.8 V0.9 Q3.2 0.2 4 0.2 H5 Q5.8 0.2 5.8 0.9 V1.8" stroke="#ffffff" stroke-width="1" fill="none"/><rect x="0" y="1.8" width="9" height="1.3" fill="#ffffff"/><path d="M0.9 3.1 H8.1 L7.6 10 H1.4 Z" fill="#ffffff"/><rect x="3.1" y="4.2" width="0.8" height="4.8" fill="#ea5265"/><rect x="5.1" y="4.2" width="0.8" height="4.8" fill="#ea5265"/></svg>
<svg class="b" style="left:1274.8px;top:597.2px;" width="12" height="11.7" viewBox="0 0 12 11.8" preserveAspectRatio="none"><path d="M8.5 2 V1.2 Q8.5 0.6 7.9 0.6 H1.2 Q0.6 0.6 0.6 1.2 V7.9 Q0.6 8.5 1.2 8.5 H2.5" stroke="#ffffff" stroke-width="1.1" fill="none"/><rect x="3.5" y="3.2" width="8" height="8" rx="0.6" stroke="#ffffff" stroke-width="1.3" fill="none"/></svg>
<div class="t" style="left:235.00px;top:632.84px;font-size:12px;color:#676574;font-weight:normal;;">8</div>
<div class="t" style="left:277.60px;top:632.84px;font-size:12px;color:#676574;font-weight:normal;;">VM - CrossDiskIOPerSecond-Max</div>
<div class="t" style="left:538.50px;top:632.84px;font-size:12px;color:#676574;font-weight:normal;;transform:scaleX(1.0329);transform-origin:0 0;">systemcenter ➔ VirtualMachine</div>
<div class="t" style="left:768.00px;top:632.84px;font-size:12px;color:#676574;font-weight:normal;;">CrossDiskIOPerSecond-Max</div>
<div class="t" style="left:996.50px;top:632.84px;font-size:12px;color:#676574;font-weight:normal;;">0</div>
<div class="b" style="left:1222px;top:628px;width:21px;height:19px;background:#f5a855;border-radius:3px"></div>
<div class="b" style="left:1246px;top:628px;width:21px;height:19px;background:#ea5265;border-radius:3px"></div>
<div class="b" style="left:1270px;top:628px;width:20px;height:19px;background:#1f84c6;border-radius:3px"></div>
<svg class="b" style="left:1227.2px;top:633px;" width="10.4" height="9.8" viewBox="0 0 11.5 11.5" preserveAspectRatio="none"><path d="M8.8 0.3 L11.2 2.7 L3.3 10.6 L0.3 11.2 L0.9 8.2 Z" fill="#ffffff"/><path d="M1.6 8.6 L2.9 9.9 L1 10.4 Z" fill="#f5a855"/></svg>
<svg class="b" style="left:1251.7px;top:633px;" width="9" height="10.1" viewBox="0 0 9 10" preserveAspectRatio="none"><path d="M3.2 1.8 V0.9 Q3.2 0.2 4 0.2 H5 Q5.8 0.2 5.8 0.9 V1.8" stroke="#ffffff" stroke-width="1" fill="none"/><rect x="0" y="1.8" width="9" height="1.3" fill="#ffffff"/><path d="M0.9 3.1 H8.1 L7.6 10 H1.4 Z" fill="#ffffff"/><rect x="3.1" y="4.2" width="0.8" height="4.8" fill="#ea5265"/><rect x="5.1" y="4.2" width="0.8" height="4.8" fill="#ea5265"/></svg>
<svg class="b" style="left:1274.8px;top:632.2px;" width="12" height="11.7" viewBox="0 0 12 11.8" preserveAspectRatio="none"><path d="M8.5 2 V1.2 Q8.5 0.6 7.9 0.6 H1.2 Q0.6 0.6 0.6 1.2 V7.9 Q0.6 8.5 1.2 8.5 H2.5" stroke="#ffffff" stroke-width="1.1" fill="none"/><rect x="3.5" y="3.2" width="8" height="8" rx="0.6" stroke="#ffffff" stroke-width="1.3" fill="none"/></svg>
<div class="t" style="left:235.00px;top:667.84px;font-size:12px;color:#676574;font-weight:normal;;">9</div>
<div class="t" style="left:277.60px;top:667.84px;font-size:12px;color:#676574;font-weight:normal;;">VM - CrossDiskIOPerSecond-Median</div>
<div class="t" style="left:538.50px;top:667.84px;font-size:12px;color:#676574;font-weight:normal;;transform:scaleX(1.0329);transform-origin:0 0;">systemcenter ➔ VirtualMachine</div>
<div class="t" style="left:768.00px;top:667.84px;font-size:12px;color:#676574;font-weight:normal;;">CrossDiskIOPerSecond-Median</div>
<div class="t" style="left:996.50px;top:667.84px;font-size:12px;color:#676574;font-weight:normal;;">0</div>
<div class="b" style="left:1222px;top:663px;width:21px;height:19px;background:#f5a855;border-radius:3px"></div>
<div class="b" style="left:1246px;top:663px;width:21px;height:19px;background:#ea5265;border-radius:3px"></div>
<div class="b" style="left:1270px;top:663px;width:20px;height:19px;background:#1f84c6;border-radius:3px"></div>
<svg class="b" style="left:1227.2px;top:668px;" width="10.4" height="9.8" viewBox="0 0 11.5 11.5" preserveAspectRatio="none"><path d="M8.8 0.3 L11.2 2.7 L3.3 10.6 L0.3 11.2 L0.9 8.2 Z" fill="#ffffff"/><path d="M1.6 8.6 L2.9 9.9 L1 10.4 Z" fill="#f5a855"/></svg>
<svg class="b" style="left:1251.7px;top:668px;" width="9" height="10.1" viewBox="0 0 9 10" preserveAspectRatio="none"><path d="M3.2 1.8 V0.9 Q3.2 0.2 4 0.2 H5 Q5.8 0.2 5.8 0.9 V1.8" stroke="#ffffff" stroke-width="1" fill="none"/><rect x="0" y="1.8" width="9" height="1.3" fill="#ffffff"/><path d="M0.9 3.1 H8.1 L7.6 10 H1.4 Z" fill="#ffffff"/><rect x="3.1" y="4.2" width="0.8" height="4.8" fill="#ea5265"/><rect x="5.1" y="4.2" width="0.8" height="4.8" fill="#ea5265"/></svg>
<svg class="b" style="left:1274.8px;top:667.2px;" width="12" height="11.7" viewBox="0 0 12 11.8" preserveAspectRatio="none"><path d="M8.5 2 V1.2 Q8.5 0.6 7.9 0.6 H1.2 Q0.6 0.6 0.6 1.2 V7.9 Q0.6 8.5 1.2 8.5 H2.5" stroke="#ffffff" stroke-width="1.1" fill="none"/><rect x="3.5" y="3.2" width="8" height="8" rx="0.6" stroke="#ffffff" stroke-width="1.3" fill="none"/></svg>
<div class="t" style="left:235.00px;top:702.84px;font-size:12px;color:#676574;font-weight:normal;;">10</div>
<div class="t" style="left:277.60px;top:702.84px;font-size:12px;color:#676574;font-weight:normal;;">VM - CrossDiskSizeAllocated-Average</div>
<div class="t" style="left:538.50px;top:702.84px;font-size:12px;color:#676574;font-weight:normal;;transform:scaleX(1.0329);transform-origin:0 0;">systemcenter ➔ VirtualMachine</div>
<div class="t" style="left:768.00px;top:702.84px;font-size:12px;color:#676574;font-weight:normal;;">CrossDiskSizeAllocated-Average</div>
<div class="t" style="left:996.50px;top:702.84px;font-size:12px;color:#676574;font-weight:normal;;">0</div>
<div class="b" style="left:1222px;top:698px;width:21px;height:19px;background:#f5a855;border-radius:3px"></div>
<div class="b" style="left:1246px;top:698px;width:21px;height:19px;background:#ea5265;border-radius:3px"></div>
<div class="b" style="left:1270px;top:698px;width:20px;height:19px;background:#1f84c6;border-radius:3px"></div>
<svg class="b" style="left:1227.2px;top:703px;" width="10.4" height="9.8" viewBox="0 0 11.5 11.5" preserveAspectRatio="none"><path d="M8.8 0.3 L11.2 2.7 L3.3 10.6 L0.3 11.2 L0.9 8.2 Z" fill="#ffffff"/><path d="M1.6 8.6 L2.9 9.9 L1 10.4 Z" fill="#f5a855"/></svg>
<svg class="b" style="left:1251.7px;top:703px;" width="9" height="10.1" viewBox="0 0 9 10" preserveAspectRatio="none"><path d="M3.2 1.8 V0.9 Q3.2 0.2 4 0.2 H5 Q5.8 0.2 5.8 0.9 V1.8" stroke="#ffffff" stroke-width="1" fill="none"/><rect x="0" y="1.8" width="9" height="1.3" fill="#ffffff"/><path d="M0.9 3.1 H8.1 L7.6 10 H1.4 Z" fill="#ffffff"/><rect x="3.1" y="4.2" width="0.8" height="4.8" fill="#ea5265"/><rect x="5.1" y="4.2" width="0.8" height="4.8" fill="#ea5265"/></svg>
<svg class="b" style="left:1274.8px;top:702.2px;" width="12" height="11.7" viewBox="0 0 12 11.8" preserveAspectRatio="none"><path d="M8.5 2 V1.2 Q8.5 0.6 7.9 0.6 H1.2 Q0.6 0.6 0.6 1.2 V7.9 Q0.6 8.5 1.2 8.5 H2.5" stroke="#ffffff" stroke-width="1.1" fill="none"/><rect x="3.5" y="3.2" width="8" height="8" rx="0.6" stroke="#ffffff" stroke-width="1.3" fill="none"/></svg>
<svg class="b" style="left:250px;top:352.9px;" width="12" height="12" viewBox="0 0 12 12" preserveAspectRatio="none"><path d="M2.9 0 V9 M0.2 9 L2.9 12 L5.6 9" stroke="#a3a2aa" stroke-width="1.6" fill="none"/><path d="M0.3 9.3 L2.9 12 L5.5 9.3 Z" fill="#a3a2aa"/><rect x="6.3" y="0" width="2.7" height="1.7" fill="#a3a2aa"/><rect x="6.3" y="3.1" width="3.8" height="1.8" fill="#a3a2aa"/><rect x="6.3" y="6.1" width="4.7" height="1.9" fill="#a3a2aa"/><rect x="6.3" y="9.3" width="5.7" height="1.8" fill="#a3a2aa"/></svg>
<svg class="b" style="left:1300.9px;top:352.9px;" width="11.7" height="12" viewBox="0 0 11.7 12" preserveAspectRatio="none"><path d="M3 0 V9.5" stroke="#d6d7db" stroke-width="1.7"/><path d="M0 9 H6 L3 12 Z" fill="#d6d7db"/><path d="M8.7 2.5 V12" stroke="#d6d7db" stroke-width="1.7"/><path d="M5.7 3 H11.7 L8.7 0 Z" fill="#d6d7db"/></svg>
<div class="b" style="left:1019px;top:733px;width:302px;height:25px;background:#fff;border:1px solid #dddddd;border-radius:4px"></div>
<div class="b" style="left:1086px;top:734px;width:25px;height:23px;background:#f3f3f3"></div>
<div class="t" style="left:1019.5px;width:65.90000000000009px;text-align:center;top:740.14px;font-size:12px;color:#7a7884">Previous</div>
<div class="b" style="left:1085px;top:734px;width:1px;height:23px;background:#dddddd"></div>
<div class="t" style="left:1085.4px;width:26.0px;text-align:center;top:740.14px;font-size:12px;color:#7a7884">1</div>
<div class="b" style="left:1111px;top:734px;width:1px;height:23px;background:#dddddd"></div>
<div class="t" style="left:1111.4px;width:26.09999999999991px;text-align:center;top:740.14px;font-size:12px;color:#7a7884">2</div>
<div class="b" style="left:1138px;top:734px;width:1px;height:23px;background:#dddddd"></div>
<div class="t" style="left:1137.5px;width:26.0px;text-align:center;top:740.14px;font-size:12px;color:#7a7884">3</div>
<div class="b" style="left:1164px;top:734px;width:1px;height:23px;background:#dddddd"></div>
<div class="t" style="left:1163.5px;width:26.0px;text-align:center;top:740.14px;font-size:12px;color:#7a7884">4</div>
<div class="b" style="left:1190px;top:734px;width:1px;height:23px;background:#dddddd"></div>
<div class="t" style="left:1189.5px;width:25.299999999999955px;text-align:center;top:740.14px;font-size:12px;color:#7a7884">5</div>
<div class="b" style="left:1215px;top:734px;width:1px;height:23px;background:#dddddd"></div>
<div class="t" style="left:1214.8px;width:28.600000000000136px;text-align:center;top:740.14px;font-size:12px;color:#7a7884">…</div>
<div class="b" style="left:1243px;top:734px;width:1px;height:23px;background:#dddddd"></div>
<div class="t" style="left:1243.4px;width:32.0px;text-align:center;top:740.14px;font-size:12px;color:#7a7884">15</div>
<div class="b" style="left:1275px;top:734px;width:1px;height:23px;background:#dddddd"></div>
<div class="t" style="left:1275.4px;width:44.799999999999955px;text-align:center;top:740.14px;font-size:12px;color:#7a7884">Next</div>
<div class="t" style="left:225.28px;top:741.24px;font-size:12px;color:#6a6874;font-weight:normal;;transform:scaleX(1.0174);transform-origin:0 0;">Showing 1 to 10 of 143 entries</div>
<div class="b" style="left:1349px;top:0;width:3px;height:768px;background:#f1f1f1"></div>
<div class="b" style="left:1351px;top:17px;width:1px;height:666px;background:#bdbdbd"></div>
</body></html>
